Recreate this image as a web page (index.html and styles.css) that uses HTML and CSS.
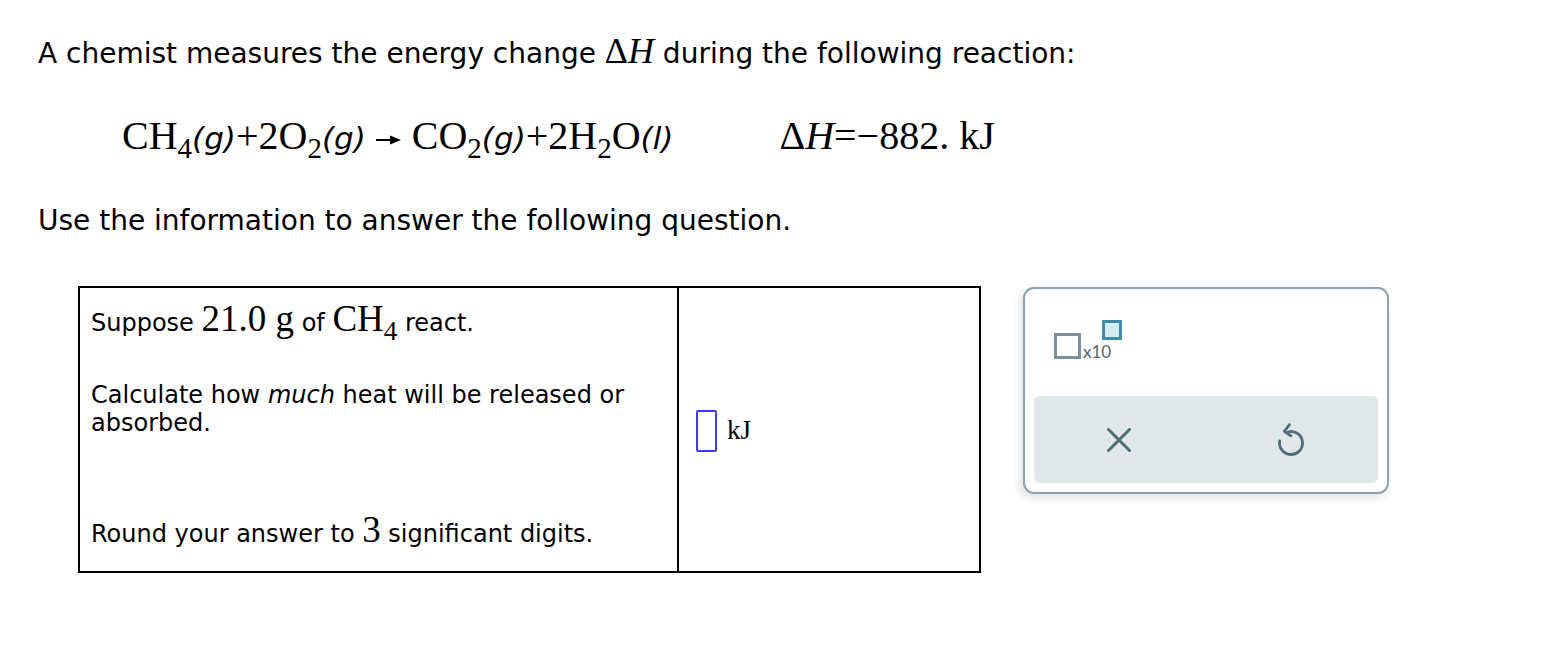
FILE: index.html
```html
<!DOCTYPE html>
<html>
<head>
<meta charset="utf-8">
<link rel="stylesheet" href="styles.css">
</head>
<body>
<div class="page">
  <p class="intro">A chemist measures the energy change <span class="m"><span class="delta">Δ</span><i>H</i></span> during the following reaction:</p>
  <div class="equation">
    <div class="rxn m">CH<sub>4</sub><span class="st">(g)</span>+2O<sub>2</sub><span class="st">(g)</span> <span class="arrow"><svg width="26" height="12" viewBox="0 0 26 12"><line x1="0" y1="6" x2="18" y2="6" stroke="#000" stroke-width="2"/><path d="M14 1.5 L25 6 L14 10.5 Z" fill="#000"/></svg></span> CO<sub>2</sub><span class="st">(g)</span>+2H<sub>2</sub>O<span class="st">(<i>l</i>)</span></div>
    <div class="dh m"><span class="delta">Δ</span><i>H</i>=−882. kJ</div>
  </div>
  <p class="use">Use the information to answer the following question.</p>
  <div class="work">
    <div class="qtable">
      <div class="qcell">
        <p class="q1">Suppose <span class="m big">21.0 g</span> of <span class="m big">CH<sub>4</sub></span> react.</p>
        <p class="q2">Calculate how <i>much</i> heat will be released or absorbed.</p>
        <p class="q3">Round your answer to <span class="m big">3</span> significant digits.</p>
      </div>
      <div class="acell">
        <span class="inbox"></span><span class="unit m">kJ</span>
      </div>
    </div>
    <div class="panel">
      <div class="sci">
        <span class="base"></span><span class="x10">x10</span><span class="exp"></span>
      </div>
      <div class="actions">
        <svg class="ico-x" width="24" height="24" viewBox="0 0 24 24"><path d="M1.5 1.5 L22.5 22.5 M22.5 1.5 L1.5 22.5" stroke="#4f6c7a" stroke-width="3" stroke-linecap="round" fill="none"/></svg>
        <svg class="ico-undo" width="30" height="36" viewBox="0 0 30 36"><path d="M12.5 9.8 A11.5 11.5 0 1 1 3.7 19" stroke="#4f6c7a" stroke-width="2.8" stroke-linecap="round" fill="none"/><path d="M13.5 2.5 L8.3 9.3 L15 13.8" stroke="#4f6c7a" stroke-width="2.8" stroke-linecap="round" stroke-linejoin="round" fill="none"/></svg>
      </div>
    </div>
  </div>
</div>
</body>
</html>
```
FILE: styles.css
```css
html, body {
  margin: 0;
  padding: 0;
  background: #fff;
}
body {
  font-family: "DejaVu Sans", Verdana, sans-serif;
  color: #000;
}
.page {
  padding: 33px 0 0 38px;
}
p { margin: 0; }
.m {
  font-family: "Liberation Serif", "Times New Roman", serif;
}
.m i { font-style: italic; }
.intro {
  font-size: 28px;
  line-height: 40px;
}
.intro .m {
  font-size: 36px;
  line-height: 1;
}
.equation {
  display: flex;
  align-items: baseline;
  margin-top: 37px;
  padding-left: 84px;
  line-height: 50px;
}
.rxn, .dh {
  font-size: 40px;
}
.rxn sub {
  font-size: 29px;
  vertical-align: -9px;
  line-height: 0;
}
.st {
  font-family: "DejaVu Sans", Verdana, sans-serif;
  font-style: italic;
  font-size: 31px;
}
.st i { font-style: italic; }
.arrow {
  display: inline-block;
  vertical-align: 3px;
  line-height: 0;
}
.dh {
  margin-left: 106px;
}
.use {
  font-size: 28px;
  line-height: 40px;
  margin-top: 38px;
}
.work {
  display: flex;
  align-items: flex-start;
  margin-top: 45px;
  margin-left: 40px;
}
.qtable {
  display: flex;
  border: 2px solid #000;
  width: 899px;
  height: 283px;
}
.qcell {
  width: 586px;
  border-right: 2px solid #000;
  padding: 15px 0 0 11px;
  font-size: 24px;
}
.big {
  font-size: 37px;
  line-height: 0;
}
.q1, .q3 {
  line-height: 40px;
}
.q1 sub {
  font-size: 27px;
  vertical-align: -9px;
  line-height: 0;
}
.q2 {
  margin-top: 38px;
  line-height: 28px;
}
.q3 {
  margin-top: 77px;
}
.acell {
  flex: 1;
  display: flex;
  align-items: center;
  padding-left: 17px;
  padding-top: 2px;
}
.inbox {
  display: inline-block;
  width: 17px;
  height: 38px;
  border: 2px solid #3b3bff;
  border-radius: 2px;
}
.unit {
  font-size: 27px;
  margin-left: 10px;
}
.panel {
  margin-left: 42px;
  margin-top: 1px;
  width: 344px;
  height: 194px;
  border: 2px solid #8da2ac;
  border-radius: 11px;
  box-shadow: -3px 4px 10px rgba(0, 0, 0, 0.12);
  background: #fff;
  display: flex;
  flex-direction: column;
  padding: 0 9px 9px 9px;
}
.sci {
  height: 107px;
  flex: none;
  position: relative;
}
.base {
  position: absolute;
  left: 20px;
  top: 44px;
  width: 21px;
  height: 20px;
  border: 3px solid #7a919b;
}
.x10 {
  position: absolute;
  left: 49px;
  top: 52px;
  font-family: "Lato", "Liberation Sans", sans-serif;
  font-size: 17px;
  color: #4e6773;
}
.exp {
  position: absolute;
  left: 68px;
  top: 31px;
  width: 14px;
  height: 14px;
  border: 3px solid #3e8ea8;
  background: #d4ecf2;
}
.actions {
  flex: 1;
  background: #e1e6e9;
  border-radius: 6px;
  display: flex;
  align-items: center;
  justify-content: space-around;
}
```
